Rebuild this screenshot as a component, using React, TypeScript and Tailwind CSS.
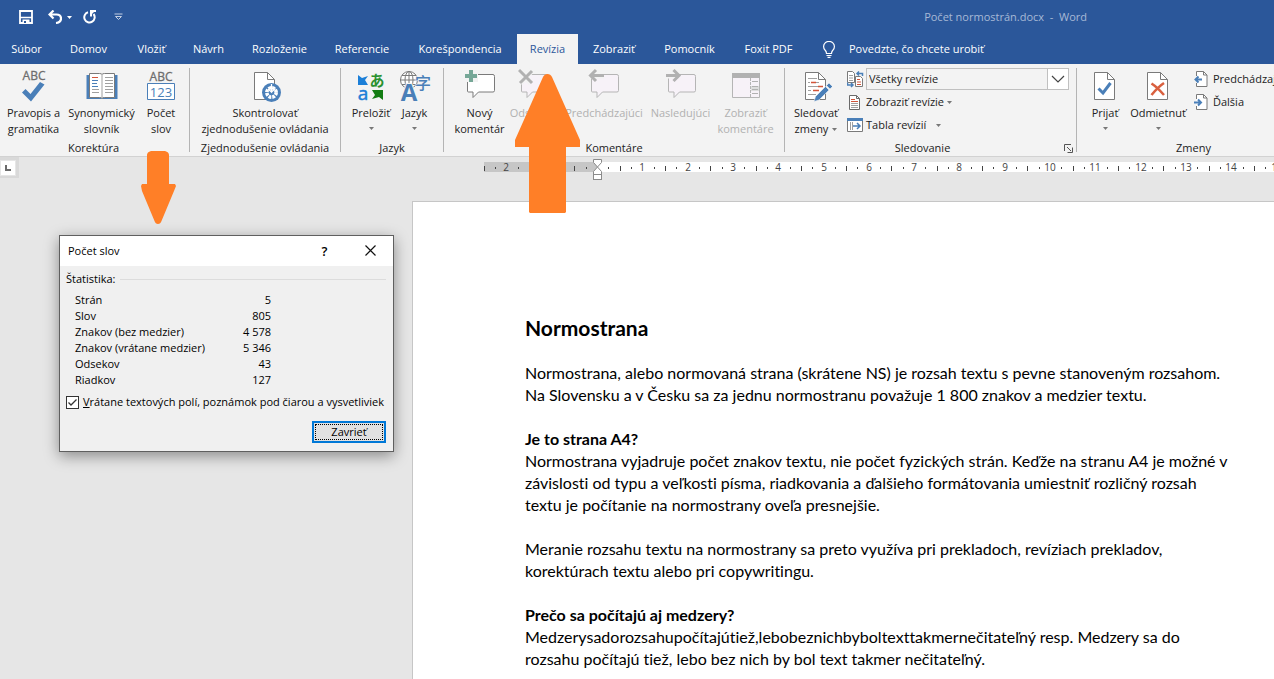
import type { ReactNode } from 'react';

const tabs: { label: string; width: string; active?: boolean }[] = [
  { label: 'Súbor', width: 'w-[53px]' },
  { label: 'Domov', width: 'w-[71px]' },
  { label: 'Vložiť', width: 'w-[55px]' },
  { label: 'Návrh', width: 'w-[59px]' },
  { label: 'Rozloženie', width: 'w-[83px]' },
  { label: 'Referencie', width: 'w-[82px]' },
  { label: 'Korešpondencia', width: 'w-[114px]' },
  { label: 'Revízia', width: 'w-[61px]', active: true },
  { label: 'Zobraziť', width: 'w-[72px]' },
  { label: 'Pomocník', width: 'w-[79px]' },
  { label: 'Foxit PDF', width: 'w-[79px]' },
];

const stats = [
  ['Strán', '5'],
  ['Slov', '805'],
  ['Znakov (bez medzier)', '4 578'],
  ['Znakov (vrátane medzier)', '5 346'],
  ['Odsekov', '43'],
  ['Riadkov', '127'],
];

function Caret({ className = '' }: { className?: string }) {
  return (
    <svg className={`inline-block shrink-0 ${className}`} width="5" height="3" viewBox="0 0 5 3" fill="currentColor" aria-hidden="true">
      <path d="M0 0h5L2.500 3z" />
    </svg>
  );
}

function Group({ label, width, children, launcher }: { label: string; width: string; children: ReactNode; launcher?: boolean }) {
  return (
    <section aria-label={label} className={`flex shrink-0 flex-col ${width}`}>
      <div className="flex h-[72px] items-start">{children}</div>
      <div className={`relative h-4 text-center leading-4 ${launcher ? 'pr-4' : ''}`}>
        {label}
        {launcher && (
          <button aria-label={`${label} – možnosti`} className="absolute right-[3px] top-1">
            <svg width="9" height="9" viewBox="0 0 9 9" fill="none" stroke="#555" aria-hidden="true">
              <path d="M.5 7V.5H7M3 3l4 4M8.500 3.500v5h-5" />
            </svg>
          </button>
        )}
      </div>
    </section>
  );
}

function Divider() {
  return <div className="mt-1 h-[84px] w-px shrink-0 bg-[#b4b4b4]" />;
}

function Tool({ icon, lines, width, disabled, caret, inlineCaret }: { icon: ReactNode; lines: string[]; width: string; disabled?: boolean; caret?: boolean; inlineCaret?: boolean }) {
  return (
    <button disabled={disabled} className={`flex shrink-0 flex-col items-center whitespace-nowrap leading-4 ${width} ${disabled ? 'text-[#b1b1b1]' : ''}`}>
      <span className="flex h-[37px] items-start">{icon}</span>
      {lines.map((line, i) => (
        <span key={line} className="flex items-center gap-1">
          {line}
          {inlineCaret && i === lines.length - 1 && <Caret className="text-[#777]" />}
        </span>
      ))}
      {caret && <Caret className="mt-[6px] text-[#777]" />}
    </button>
  );
}

const SpellIcon = () => (
  <svg width="32" height="34" viewBox="0 0 32 34" aria-hidden="true">
    <text x="16" y="12" textAnchor="middle" fontSize="12" fill="#6d6d6d" stroke="#6d6d6d" strokeWidth=".3">ABC</text>
    <path d="M4 24.500l3.500-3.500 5 5L22 14l4.500 2.500L13 33.500z" fill="#4a7fb8" />
  </svg>
);

const BookIcon = () => (
  <svg width="32" height="34" viewBox="0 0 32 34" fill="none" aria-hidden="true">
    <path d="M.5 7h31v24H.5z" fill="#4a7fb8" />
    <path d="M3.500 5.500h10q2 0 2.500 1 .5-1 2.500-1h10v24h-10q-2 0-2.500 1-.5-1-2.500-1h-10z" fill="#fff" stroke="#7a7a7a" />
    <path d="M16 6.500v24" stroke="#a0a0a0" />
    <path d="M6 12.500h6M6 15.500h5M6 18.500h6" stroke="#4a7fb8" />
    <path d="M6 9.500h6" stroke="#d2553a" />
    <path d="M6 21.500h7M6 24.500h7M19 9.500h8M19 12.500h8M19 15.500h8M19 18.500h8M19 21.500h8M19 24.500h8" stroke="#a0a0a0" />
  </svg>
);

const CountIcon = () => (
  <svg width="32" height="34" viewBox="0 0 32 34" aria-hidden="true">
    <text x="16" y="13" textAnchor="middle" fontSize="12" fill="#6d6d6d" stroke="#6d6d6d" strokeWidth=".3">ABC</text>
    <path d="M2.500 15.500h27v16h-27z" fill="#fff" stroke="#4a7fb8" />
    <text x="16" y="29" textAnchor="middle" fontSize="13" fill="#4a7fb8">123</text>
  </svg>
);

const AccessIcon = () => (
  <svg width="32" height="34" viewBox="0 0 32 34" fill="none" aria-hidden="true">
    <path d="M5.500 4.500h13l7 7v20h-20z" fill="#fff" stroke="#7a7a7a" />
    <path d="M18.500 4.500v7h7" stroke="#7a7a7a" />
    <circle cx="22.500" cy="24.500" r="9.500" fill="#4a7fb8" />
    <circle cx="22.500" cy="24.500" r="4.700" stroke="#fff" strokeWidth="3.600" strokeDasharray="2.700 1" />
    <path d="M22.500 16v8l-3.500-3M22.500 24l4-3.500" stroke="#fff" strokeWidth="1.300" />
  </svg>
);

const TranslateIcon = () => (
  <svg className="overflow-visible" width="32" height="34" viewBox="0 0 32 34" aria-hidden="true">
    <path d="M3 7l4 3 6-2-3 4 3 5H3z" fill="#1b7fd8" />
    <path d="M17 22h11v10l-4-3-7 2 3-4z" fill="#137d13" />
    <text x="8" y="32" textAnchor="middle" fontSize="19" fill="#1b7fd8" stroke="#1b7fd8" strokeWidth=".5">a</text>
    <text x="22" y="18" textAnchor="middle" fontSize="15" fontWeight="bold" fill="#2a912f" fontFamily="Noto Sans CJK JP, sans-serif">あ</text>
  </svg>
);

const LanguageIcon = () => (
  <svg className="overflow-visible" width="32" height="34" viewBox="0 0 32 34" fill="none" aria-hidden="true">
    <g stroke="#7a7a7a">
      <circle cx="10" cy="12" r="8.500" fill="#fff" />
      <ellipse cx="10" cy="12" rx="4" ry="8.500" />
      <path d="M10 3.500v17M1.500 12h17M3 7.500h14M3 16.500h14" />
    </g>
    <text x="10" y="33" textAnchor="middle" fontSize="24" fontWeight="bold" fill="#4a7fb8" stroke="#f3f3f3" strokeWidth="2" paintOrder="stroke">A</text>
    <text x="24" y="21" textAnchor="middle" fontSize="16" fontWeight="500" fill="#4a7fb8" stroke="#f3f3f3" strokeWidth="1" paintOrder="stroke" fontFamily="Noto Sans CJK SC, sans-serif">字</text>
  </svg>
);

function Bubble({ children, dim }: { children: ReactNode; dim?: boolean }) {
  return (
    <svg width="32" height="34" viewBox="0 0 32 34" fill="none" aria-hidden="true">
      <path d="M4.500 6.500q-1 0-1 1V23q0 1 1 1h4.500v5.500L14.500 24H29q1.500 0 1.500-1.500v-14Q30.500 6.500 29 6.500z" fill={dim ? '#f7f2f8' : '#fff'} stroke={dim ? '#b5b5b5' : '#7a7a7a'} />
      {children}
    </svg>
  );
}

const NewComment = () => (
  <Bubble>
    <path d="M0 1h14v13H2z" fill="#f3f3f3" />
    <path d="M5 2h4v4h4v4H9v4H5v-4H1V6h4z" fill="#76a797" />
  </Bubble>
);
const DeleteComment = () => (
  <Bubble dim>
    <path d="M1 3l12 12M14 2L2 15" stroke="#f3f3f3" strokeWidth="6" />
    <path d="M1 2l13 13M14 3L2 15" stroke="#b1b1b1" strokeWidth="3" />
  </Bubble>
);
const PrevComment = () => (
  <Bubble dim>
    <path d="M16 7H3" stroke="#f3f3f3" strokeWidth="7" />
    <path d="M16 7.500H3M8 2L2.500 7.500 8 13" stroke="#b1b1b1" strokeWidth="3" />
  </Bubble>
);
const NextComment = () => (
  <Bubble dim>
    <path d="M1 7h13" stroke="#f3f3f3" strokeWidth="7" />
    <path d="M1 7.500h13M8.500 2L14 7.500 8.500 13" stroke="#b1b1b1" strokeWidth="3" />
  </Bubble>
);

const ShowComments = () => (
  <svg width="32" height="34" viewBox="0 0 32 34" fill="none" aria-hidden="true">
    <path d="M2.500 5.500h27v24h-27z" fill="#f7f2f8" stroke="#b5b5b5" />
    <path d="M2 5h28v5H2z" fill="#b1b1b1" />
    <path d="M20.500 10v19" stroke="#b5b5b5" strokeDasharray="3 1" />
    <path d="M21 18h8v5h-8z" fill="#ddd" />
    <path d="M22 13.500h6M22 18.500h6M22 21.500h6M22 25.500h6" stroke="#b1b1b1" />
  </svg>
);

const TrackIcon = () => (
  <svg width="32" height="34" viewBox="0 0 32 34" fill="none" aria-hidden="true">
    <path d="M5.500 4.500h13l7 7v20h-20z" fill="#fff" stroke="#7a7a7a" />
    <path d="M18.500 4.500v7h7" stroke="#7a7a7a" />
    <path d="M8 10.500h9M8 14.500h2M16 14.500h3M8 18.500h10M8 22.500h3M8 26.500h8" stroke="#a0a0a0" />
    <path d="M11 14.500h5M13 22.500h6M18 18.500h5" stroke="#d2553a" strokeWidth="1.500" />
    <path d="M14 33.500l1.500-5L25.500 18.500l3.500 3.500L19 32zM26.500 17.500L29 15l3.500 3.500-2.500 2.500z" fill="#4a7fb8" stroke="#f3f3f3" strokeWidth=".6" />
  </svg>
);

function PageIcon({ children }: { children: ReactNode }) {
  return (
    <svg width="32" height="34" viewBox="0 0 32 34" fill="none" aria-hidden="true">
      <path d="M5.500 4.500h13l7 7v20h-20z" fill="#fff" stroke="#7a7a7a" />
      <path d="M18.500 4.500v7h7" stroke="#7a7a7a" />
      {children}
    </svg>
  );
}

const CompareIcon = () => (
  <svg width="17" height="17" viewBox="0 0 17 17" fill="none" aria-hidden="true">
    <path d="M.5.5h5l2 2v9h-7z" fill="#fff" stroke="#7a7a7a" />
    <path d="M2 4.500h4M2 7h4M2 9.500h4" stroke="#a0a0a0" />
    <path d="M8.500 5.500h5l2 2v8h-7z" fill="#fff" stroke="#7a7a7a" />
    <path d="M10 8.500h3M10 11h4M10 13.500h4" stroke="#d2553a" />
    <path d="M15.500 5V2.500H10M12 .5l-2 2 2 2M.5 11.500V14H6M4 12l2 2-2 2" stroke="#4a7fb8" strokeWidth="1.500" />
  </svg>
);
const MarkupIcon = () => (
  <svg width="17" height="15" viewBox="0 0 17 15" fill="none" aria-hidden="true">
    <path d="M2.500.5h7l3 3v11h-10z" fill="#fff" stroke="#6a6a6a" />
    <path d="M9.500.5v3h3" stroke="#6a6a6a" />
    <path d="M4 4.500h4M4 6.500h7" stroke="#d2553a" />
    <path d="M4 8.500h7M4 10.500h7M4 12.500h7" stroke="#a0a0a0" />
  </svg>
);
const PaneIcon = () => (
  <svg width="17" height="15" viewBox="0 0 17 15" fill="none" aria-hidden="true">
    <path d="M.5.5h15v13H.5z" fill="#fff" stroke="#7a7a7a" />
    <path d="M0 0h16v3H0z" fill="#4a7fb8" />
    <path d="M3.500 4v8M5.500 4v8" stroke="#a0a0a0" />
    <path d="M6 8h7M10 5l3 3-3 3" stroke="#4a7fb8" strokeWidth="1.500" />
  </svg>
);
function StepIcon({ next }: { next?: boolean }) {
  return (
    <svg width="14" height="17" viewBox="0 0 14 17" fill="none" aria-hidden="true">
      <path d="M2.500 5V.5h7l3.500 3.500v11.500H2.500V12" fill="#fff" stroke="#7a7a7a" />
      <path d="M9.500.5v3.500H13" stroke="#7a7a7a" />
      {next ? <path d="M0 8.500h7M4 5.500l3 3-3 3" stroke="#4a7fb8" strokeWidth="2" /> : <path d="M1 8.500h7M4.500 5.500l-3 3 3 3" stroke="#4a7fb8" strokeWidth="2" />}
    </svg>
  );
}

function Ruler() {
  const unit = 45.3;
  const zero = 113;
  const marks: ReactNode[] = [];
  for (let q = -10; q <= 60; q++) {
    const x = Math.round(zero + (q * unit) / 4);
    if (q === 0) continue;
    if (q % 4 === 0) {
      marks.push(
        <text key={q} x={x} y="9" textAnchor="middle" fontSize="10" fill="#444">
          {Math.abs(q / 4)}
        </text>,
      );
    } else if (q % 2 === 0) {
      marks.push(<rect key={q} x={x} y="4" width="1" height="5" fill="#444" />);
    } else {
      marks.push(<rect key={q} x={x} y="5" width="1" height="2" fill="#444" />);
    }
  }
  return (
    <svg className="block h-6 w-full" aria-label="Pravítko">
      <g transform="translate(0 4)">
        <rect width="113" height="10" fill="#c6c6c6" />
        <rect x="113" width="100%" height="10" fill="#fff" />
        {marks}
        <path d="M109.500-2.500h8v3l-4 4.500-4-4.500z" fill="#fff" stroke="#8a8a8a" />
        <path d="M109.500 12.500v-3l4-4.500 4 4.500v3z" fill="#fff" stroke="#8a8a8a" />
        <rect x="109.500" y="12.500" width="8" height="5" fill="#fff" stroke="#8a8a8a" />
      </g>
    </svg>
  );
}

function WordCountDialog() {
  return (
    <div role="dialog" aria-label="Počet slov" className="absolute left-[59px] top-[235px] w-[335px] border border-[#5f5f5f] bg-[#f0f0f0] pb-2 text-[11px] text-black shadow-[0_4px_14px_rgba(0,0,0,0.4)]">
      <div className="flex h-[30px] items-center bg-white pl-2">
        <h2 className="flex-1">Počet slov</h2>
        <button aria-label="Pomocník" className="w-[45px] text-[13px] font-semibold leading-7">?</button>
        <button aria-label="Zavrieť okno" className="flex w-[46px] justify-center pb-px">
          <svg width="11" height="11" viewBox="0 0 11 11" stroke="#111" strokeWidth="1.200" aria-hidden="true">
            <path d="M.5.5l10 10M10.500.5l-10 10" />
          </svg>
        </button>
      </div>
      <div className="flex h-[26px] items-center gap-[5px] pl-[6px] pr-[7px] pt-px">
        <span>Štatistika:</span>
        <span className="h-px flex-1 bg-[#dcdcdc]" />
      </div>
      <table className="ml-[15px] w-[196px] leading-4">
        <tbody>
          {stats.map(([name, value]) => (
            <tr key={name}>
              <th scope="row" className="whitespace-nowrap text-left font-normal">{name}</th>
              <td className="text-right">{value}</td>
            </tr>
          ))}
        </tbody>
      </table>
      <label className="mt-[6px] flex h-4 items-center gap-1 whitespace-nowrap pl-[6px]">
        <span className="grid">
          <input type="checkbox" defaultChecked className="peer col-start-1 row-start-1 size-[13px] appearance-none border border-[#333] bg-white" />
          <svg className="pointer-events-none col-start-1 row-start-1 opacity-0 peer-checked:opacity-100" width="13" height="13" viewBox="0 0 13 13" fill="none" stroke="#333" strokeWidth="1.300" aria-hidden="true">
            <path d="M2.500 6.500L5 9l5.500-5.500" />
          </svg>
        </span>
        <span>
          <u>V</u>rátane textových polí, poznámok pod čiarou a vysvetliviek
        </span>
      </label>
      <div className="mt-[11px] flex justify-end pr-[7px]">
        <button className="h-[22px] w-[74px] border-2 border-[#0078d7] bg-[#e1e1e1] p-px">
          <span className="flex h-full items-center justify-center border border-dotted border-black">Zavrieť</span>
        </button>
      </div>
    </div>
  );
}

export default function App() {
  return (
    <div className="relative flex h-screen min-h-[640px] flex-col overflow-hidden bg-[#e6e6e6] font-['Open_Sans','Noto_Sans',sans-serif] text-[11px] text-[#222]">
      <header className="shrink-0 bg-[#2b579a] text-white">
        <div className="flex h-[34px] items-center pl-[19px]">
          <button aria-label="Uložiť">
            <svg width="14" height="14" viewBox="0 0 14 14" fill="none" stroke="#fff" aria-hidden="true">
              <path d="M1 1h12v12H1z" strokeWidth="1.800" />
              <path d="M1 7.500h12" strokeWidth="1.500" />
              <path d="M3.500 9.500h7V13h-7z" fill="#fff" stroke="none" />
              <path d="M5 11h2v2H5z" fill="#2b579a" stroke="none" />
            </svg>
          </button>
          <button aria-label="Späť" className="ml-[15px] flex items-center gap-[5px]">
            <svg width="14" height="14" viewBox="0 0 14 14" fill="none" stroke="#fff" strokeWidth="2.200" aria-hidden="true">
              <path d="M5.500.5L1.500 4.500l4 4M1.500 4.500H8.500Q13 4.500 13 8.500T8 13" />
            </svg>
            <Caret />
          </button>
          <button aria-label="Zopakovať" className="ml-[11px]">
            <svg width="14" height="14" viewBox="0 0 14 14" fill="none" stroke="#fff" strokeWidth="2" aria-hidden="true">
              <path d="M5 2.300A5.200 5.200 0 1 0 10.500 4" />
              <path d="M7 1h6M8 1v5.500" />
              <path d="M8 1h4L8 5z" fill="#fff" stroke="none" />
            </svg>
          </button>
          <button aria-label="Prispôsobiť panel" className="ml-[17px]">
            <svg width="9" height="8" viewBox="0 0 9 8" fill="none" stroke="#c3cfe3" aria-hidden="true">
              <path d="M.5 1h8M1.500 3.500h6l-3 3z" />
            </svg>
          </button>
          <h1 className="ml-auto mr-[187px] whitespace-pre text-[#a7b9d6]">{'Počet normostrán.docx  -  Word'}</h1>
        </div>
        <nav className="flex h-[30px]">
          {tabs.map((tab) => (
            <button key={tab.label} className={`shrink-0 whitespace-nowrap ${tab.width} ${tab.active ? 'bg-[#f3f3f3] text-[#2b579a]' : ''}`}>
              {tab.label}
            </button>
          ))}
          <button className="ml-[15px] flex items-center gap-[14px] whitespace-nowrap">
            <svg width="12" height="17" viewBox="0 0 12 17" fill="none" stroke="#fff" strokeWidth="1.200" aria-hidden="true">
              <path d="M3.500 12.500Q3.500 10.500 2 9 .6 7.500.6 5.500A5.300 5 0 0 1 11.400 5.500q0 2-1.400 3.500-1.500 1.500-1.500 3.500zM3.500 14.500h5M4.500 16.400h3" />
            </svg>
            Povedzte, čo chcete urobiť
          </button>
        </nav>
      </header>

      <div className="flex h-[93px] shrink-0 overflow-hidden border-b border-[#d2d2d2] bg-[#f3f3f3] [&>section]:pt-1">
        <Group label="Korektúra" width="w-[189px] pr-[2px]">
          <Tool icon={<SpellIcon />} lines={['Pravopis a', 'gramatika']} width="w-[67px]" />
          <Tool icon={<BookIcon />} lines={['Synonymický', 'slovník']} width="w-[69px]" />
          <Tool icon={<CountIcon />} lines={['Počet', 'slov']} width="w-[50px]" />
        </Group>
        <Divider />
        <Group label="Zjednodušenie ovládania" width="w-[150px]">
          <Tool icon={<AccessIcon />} lines={['Skontrolovať', 'zjednodušenie ovládania']} width="w-full" />
        </Group>
        <Divider />
        <Group label="Jazyk" width="w-[102px]">
          <Tool icon={<TranslateIcon />} lines={['Preložiť']} width="w-[60px]" caret />
          <Tool icon={<LanguageIcon />} lines={['Jazyk']} width="w-[27px]" caret />
        </Group>
        <Divider />
        <Group label="Komentáre" width="w-[340px]">
          <Tool icon={<NewComment />} lines={['Nový', 'komentár']} width="w-[71px]" />
          <Tool icon={<DeleteComment />} lines={['Odstrániť']} width="w-[38px]" disabled />
          <Tool icon={<PrevComment />} lines={['Predchádzajúci']} width="w-[102px]" disabled />
          <Tool icon={<NextComment />} lines={['Nasledujúci']} width="w-[51px]" disabled />
          <Tool icon={<ShowComments />} lines={['Zobraziť', 'komentáre']} width="w-[79px]" disabled />
        </Group>
        <Divider />
        <Group label="Sledovanie" width="w-[291px]" launcher>
          <Tool icon={<TrackIcon />} lines={['Sledovať', 'zmeny']} width="w-[62px]" inlineCaret />
          <div className="flex flex-col">
            <div className="flex h-[22px] items-center gap-[2px]">
              <CompareIcon />
              <div className="grid h-[22px] w-[203px]">
                <select aria-label="Zobrazenie revízií" className="col-start-1 row-start-1 appearance-none border border-[#c0c0c0] bg-[#f3f3f3] pl-[2px] leading-4">
                  <option>Všetky revízie</option>
                </select>
                <span className="pointer-events-none col-start-1 row-start-1 flex w-[22px] items-center justify-center justify-self-end border border-[#c0c0c0] bg-white">
                  <svg width="14" height="8" viewBox="0 0 14 8" fill="none" stroke="#444" strokeWidth="1.200" aria-hidden="true">
                    <path d="M1 1l6 6 6-6" />
                  </svg>
                </span>
              </div>
            </div>
            <button className="flex h-6 items-center gap-[2px]">
              <MarkupIcon />
              Zobraziť revízie
              <Caret className="ml-px text-[#777]" />
            </button>
            <button className="flex h-[22px] items-center gap-[2px]">
              <PaneIcon />
              Tabla revízií
              <Caret className="ml-2 text-[#777]" />
            </button>
          </div>
        </Group>
        <Divider />
        <Group label="Zmeny" width="w-[233px]">
          <Tool icon={<PageIcon><path d="M9.500 20.500l4.500 4.500L21.500 15" stroke="#4a7fb8" strokeWidth="3" /></PageIcon>} lines={['Prijať']} width="w-[56px]" caret />
          <Tool icon={<PageIcon><path d="M9.500 15.500Q15 19 22 27M22 15Q16 19 9.500 27" stroke="#d9603f" strokeWidth="2.600" /></PageIcon>} lines={['Odmietnuť']} width="w-[50px]" caret />
          <div className="ml-[11px] flex flex-col whitespace-nowrap">
            <button className="flex h-[22px] items-center gap-[5px]">
              <StepIcon />
              Predchádzajúci
            </button>
            <button className="flex h-6 items-center gap-[5px]">
              <StepIcon next />
              Ďalšia
            </button>
          </div>
        </Group>
      </div>

      <div className="flex h-11 shrink-0 items-start">
        <div className="flex h-[21px] w-[19px] items-center bg-[#d9d9d9]">
          <button aria-label="Tabulátor" className="flex size-4 items-center justify-center border border-[#e6e6e6] bg-white">
            <svg width="6" height="6" viewBox="0 0 6 6" aria-hidden="true">
              <path d="M0 0h2v4h4v2H0z" fill="#6b6b6b" />
            </svg>
          </button>
        </div>
        <div className="ml-[465px] flex-1 pt-px">
          <Ruler />
        </div>
      </div>

      <main className="ml-[412px] flex-1 overflow-hidden border-l border-t border-[#c6c6c6] bg-white pl-[112px] pt-[114px] font-[Lato,'Open_Sans',sans-serif] text-[16px] leading-[22px] text-black [font-variant-ligatures:none]">
        <article className="flex flex-col gap-[22px] whitespace-nowrap">
          <h2 className="text-[21px] font-bold leading-6">Normostrana</h2>
          <p>
            Normostrana, alebo normovaná strana (skrátene NS) je rozsah textu s pevne stanoveným rozsahom.
            <br />
            Na Slovensku a v Česku sa za jednu normostranu považuje 1 800 znakov a medzier textu.
          </p>
          <div>
            <h3 className="font-bold">Je to strana A4?</h3>
            <p>
              Normostrana vyjadruje počet znakov textu, nie počet fyzických strán. Keďže na stranu A4 je možné v
              <br />
              závislosti od typu a veľkosti písma, riadkovania a ďalšieho formátovania umiestniť rozličný rozsah
              <br />
              textu je počítanie na normostrany oveľa presnejšie.
            </p>
          </div>
          <p>
            Meranie rozsahu textu na normostrany sa preto využíva pri prekladoch, revíziach prekladov,
            <br />
            korektúrach textu alebo pri copywritingu.
          </p>
          <div>
            <h3 className="font-bold">Prečo sa počítajú aj medzery?</h3>
            <p>
              Medzerysadorozsahupočítajútiež,lebobeznichbyboltexttakmernečitateľný resp. Medzery sa do
              <br />
              rozsahu počítajú tiež, lebo bez nich by bol text takmer nečitateľný.
            </p>
          </div>
        </article>
      </main>

      <WordCountDialog />

      <svg className="pointer-events-none absolute left-[515px] top-[74px]" width="65" height="139" viewBox="0 0 65 139" fill="#ff7f27" aria-hidden="true">
        <path d="M32.500 0Q35.500 0 37 3L65 66v7H51v65l-1 1H15l-1-1V73H0v-7L28 3q1.500-3 4.500-3z" />
      </svg>
      <svg className="pointer-events-none absolute left-[141px] top-[151px]" width="35" height="73" viewBox="0 0 35 73" fill="#ff7f27" aria-hidden="true">
        <path d="M10 0h14q4 1 4 4v29h6l1 2-2 5-12.500 30q-1 3-3.500 3t-3.500-3L1 40 0 35l1-2h5V4q0-3 4-4z" />
      </svg>
    </div>
  );
}
